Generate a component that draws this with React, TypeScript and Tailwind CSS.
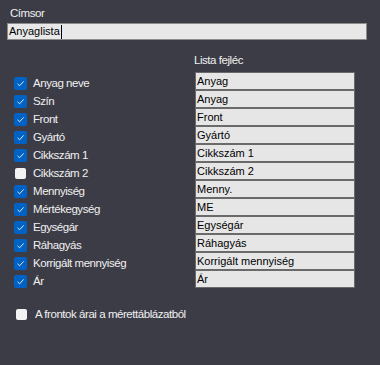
import React, { useState } from "react";

const columns = [
  { label: "Anyag neve", header: "Anyag", checked: true },
  { label: "Szín", header: "Anyag", checked: true },
  { label: "Front", header: "Front", checked: true },
  { label: "Gyártó", header: "Gyártó", checked: true },
  { label: "Cikkszám 1", header: "Cikkszám 1", checked: true },
  { label: "Cikkszám 2", header: "Cikkszám 2", checked: false },
  { label: "Mennyiség", header: "Menny.", checked: true },
  { label: "Mértékegység", header: "ME", checked: true },
  { label: "Egységár", header: "Egységár", checked: true },
  { label: "Ráhagyás", header: "Ráhagyás", checked: true },
  { label: "Korrigált mennyiség", header: "Korrigált mennyiség", checked: true },
  { label: "Ár", header: "Ár", checked: true },
];

const CheckBox = ({ checked }: { checked: boolean }) =>
  checked ? (
    <span className="flex h-[13px] w-[13px] shrink-0 items-center justify-center rounded-[2px] bg-[#0062c4]">
      <svg width="9" height="9" viewBox="0 0 9 9" fill="none">
        <path d="M1.5 4.8 L3.6 6.8 L7.6 2.4" stroke="#dfe9f7" strokeWidth="1" />
      </svg>
    </span>
  ) : (
    <span className="flex h-[13px] w-[13px] shrink-0 items-center justify-center">
      <span className="h-[11px] w-[11px] rounded-[2px] bg-[#f3f3f3]" />
    </span>
  );

const App = () => {
  const [rows] = useState(columns);

  return (
    <div className="h-[365px] w-[380px] bg-[#3c3c46] font-['Liberation_Sans',Arial,sans-serif] text-[11.5px] tracking-[-0.45px] text-[#f0f0f0]">
      <div className="px-[7px] pt-[5px]">
        <div className="pl-[3px] leading-[16px]">Címsor</div>
        <div className="mt-[2px] flex h-[17px] w-[360px] items-center border border-[#8c8c8c] bg-[#e8e8e8] pl-[1px] text-[11px] leading-[15px] tracking-normal text-black">
          Anyaglista<span className="ml-px h-[14px] w-px bg-black" />
        </div>
      </div>

      <div className="mt-[13px] flex">
        <div className="w-[195px] pl-[14px] pt-[21px]">
          {rows.map((r) => (
            <div key={r.label} className="flex h-[18px] items-center gap-[6px]">
              <CheckBox checked={r.checked} />
              <span className="leading-[16px]">{r.label}</span>
            </div>
          ))}
        </div>
        <div className="w-[160px]">
          <div className="-ml-[1px] -mt-[1px] leading-[16px]">Lista fejléc</div>
          <div className="mt-[4px] tracking-normal">
            {rows.map((r, i) => (
              <div
                key={i}
                className="flex h-[18px] items-center border border-[#6a6a6a] bg-[#e6e6e6] pl-[1px] text-[11px] text-black"
              >
                {r.header}
              </div>
            ))}
          </div>
        </div>
      </div>

      <div className="mt-[16px] flex items-center gap-[7px] pl-[15px]">
        <CheckBox checked={false} />
        <span className="leading-[16px]">A frontok árai a mérettáblázatból</span>
      </div>
    </div>
  );
};

export default App;
